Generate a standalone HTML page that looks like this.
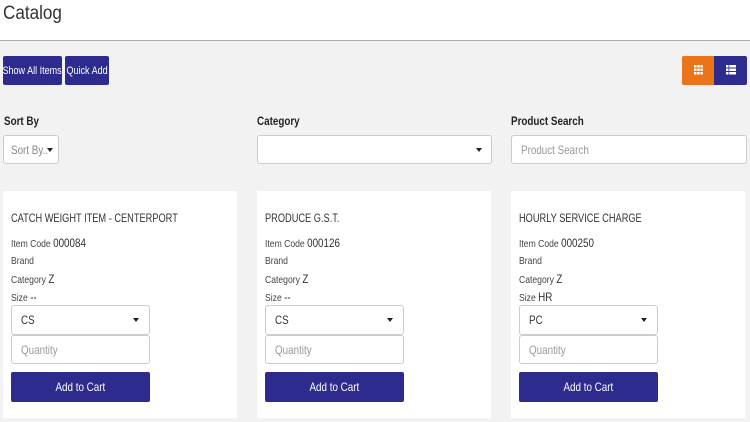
<!DOCTYPE html>
<html><head><meta charset="utf-8"><style>
*{box-sizing:border-box;margin:0;padding:0}
body{width:750px;height:422px;background:#f2f2f2;font-family:"Liberation Sans",sans-serif;position:relative;overflow:hidden;color:#333}
.a{position:absolute}
.c{display:inline-block;transform:scaleX(.82);transform-origin:left center;white-space:nowrap}
.btn{position:absolute;background:#2e2b8f;color:#fff;font-size:11px;border-radius:2px;display:flex;align-items:center;justify-content:center;overflow:visible}
.btn .c{transform-origin:center;margin:0 -20px}
.in{position:absolute;background:#fff;border:1px solid #ccc;border-radius:3px;font-size:12px;color:#999;display:flex;align-items:center;padding-left:9px}
.lbl{position:absolute;font-size:12px;font-weight:bold;color:#222}
.card{position:absolute;top:191px;width:234px;height:227px;background:#fff}
.card .t{position:absolute;left:8px;top:20px;font-size:12px;color:#333;line-height:14px}
.card .t .c{transform:scaleX(.77)}
.card .r{position:absolute;left:8px;font-size:10.5px;color:#444;height:14px;line-height:14px}
.card .r b{font-weight:normal;font-size:12px;color:#333}
.arr{position:absolute;right:10px;top:12px;width:0;height:0;border-left:3px solid transparent;border-right:3px solid transparent;border-top:4px solid #222}
</style></head><body>
<div class="a" style="left:0;top:0;width:750px;height:41px;background:#fff;border-bottom:1px solid #aaa"></div>
<div class="a" style="left:3px;top:3px;font-size:19px;color:#333"><span class="c" style="transform:scaleX(.9)">Catalog</span></div>
<div class="btn" style="left:3px;top:56px;width:59px;height:29px"><span class="c">Show All Items</span></div>
<div class="btn" style="left:65px;top:56px;width:44px;height:29px"><span class="c">Quick Add</span></div>
<div class="a" style="left:682px;top:56px;width:33px;height:29px;background:#ec7418;border-radius:2px 0 0 2px"></div>
<div class="a" style="left:714px;top:56px;width:33px;height:29px;background:#2e2b8f;border-radius:0 2px 2px 0"></div>
<svg class="a" style="left:694px;top:65px" width="9" height="10" viewBox="0 0 9 10"><g fill="#fff"><rect x="0" y="0" width="2.5" height="2.5"/><rect x="3.2" y="0" width="2.5" height="2.5"/><rect x="6.4" y="0" width="2.5" height="2.5"/><rect x="0" y="3.5" width="2.5" height="2.5"/><rect x="3.2" y="3.5" width="2.5" height="2.5"/><rect x="6.4" y="3.5" width="2.5" height="2.5"/><rect x="0" y="7" width="2.5" height="2.5"/><rect x="3.2" y="7" width="2.5" height="2.5"/><rect x="6.4" y="7" width="2.5" height="2.5"/></g></svg>
<svg class="a" style="left:726px;top:65px" width="10" height="10" viewBox="0 0 10 10"><g fill="#fff"><rect x="0" y="0" width="2.5" height="2.5"/><rect x="3.3" y="0" width="6.7" height="2.5"/><rect x="0" y="3.5" width="2.5" height="2.5"/><rect x="3.3" y="3.5" width="6.7" height="2.5"/><rect x="0" y="7" width="2.5" height="2.5"/><rect x="3.3" y="7" width="6.7" height="2.5"/></g></svg>
<div class="lbl" style="left:4px;top:114px"><span class="c">Sort By</span></div>
<div class="lbl" style="left:257px;top:114px"><span class="c">Category</span></div>
<div class="lbl" style="left:511px;top:114px"><span class="c">Product Search</span></div>
<div class="in" style="left:3px;top:135px;width:56px;height:29px;padding-left:7px"><span class="c" style="color:#888">Sort By..</span><div class="arr" style="right:5px"></div></div>
<div class="in" style="left:257px;top:135px;width:235px;height:29px"><div class="arr" style="right:9px"></div></div>
<div class="in" style="left:511px;top:135px;width:236px;height:29px"><span class="c">Product Search</span></div>

<div class="card" style="left:3px">
<div class="t"><span class="c">CATCH WEIGHT ITEM - CENTERPORT</span></div>
<div class="r" style="top:45px"><span class="c">Item Code <b>000084</b></span></div>
<div class="r" style="top:63px"><span class="c">Brand</span></div>
<div class="r" style="top:81px"><span class="c">Category <b>Z</b></span></div>
<div class="r" style="top:99px"><span class="c">Size <b>--</b></span></div>
<div class="in" style="left:8px;top:114px;width:139px;height:30px;color:#333"><span class="c">CS</span><div class="arr"></div></div>
<div class="in" style="left:8px;top:144px;width:139px;height:29px"><span class="c">Quantity</span></div>
<div class="btn" style="left:8px;top:181px;width:139px;height:30px;font-size:12px"><span class="c">Add to Cart</span></div>
</div>
<div class="card" style="left:257px">
<div class="t"><span class="c">PRODUCE G.S.T.</span></div>
<div class="r" style="top:45px"><span class="c">Item Code <b>000126</b></span></div>
<div class="r" style="top:63px"><span class="c">Brand</span></div>
<div class="r" style="top:81px"><span class="c">Category <b>Z</b></span></div>
<div class="r" style="top:99px"><span class="c">Size <b>--</b></span></div>
<div class="in" style="left:8px;top:114px;width:139px;height:30px;color:#333"><span class="c">CS</span><div class="arr"></div></div>
<div class="in" style="left:8px;top:144px;width:139px;height:29px"><span class="c">Quantity</span></div>
<div class="btn" style="left:8px;top:181px;width:139px;height:30px;font-size:12px"><span class="c">Add to Cart</span></div>
</div>
<div class="card" style="left:511px">
<div class="t"><span class="c">HOURLY SERVICE CHARGE</span></div>
<div class="r" style="top:45px"><span class="c">Item Code <b>000250</b></span></div>
<div class="r" style="top:63px"><span class="c">Brand</span></div>
<div class="r" style="top:81px"><span class="c">Category <b>Z</b></span></div>
<div class="r" style="top:99px"><span class="c">Size <b>HR</b></span></div>
<div class="in" style="left:8px;top:114px;width:139px;height:30px;color:#333"><span class="c">PC</span><div class="arr"></div></div>
<div class="in" style="left:8px;top:144px;width:139px;height:29px"><span class="c">Quantity</span></div>
<div class="btn" style="left:8px;top:181px;width:139px;height:30px;font-size:12px"><span class="c">Add to Cart</span></div>
</div>
</body></html>
